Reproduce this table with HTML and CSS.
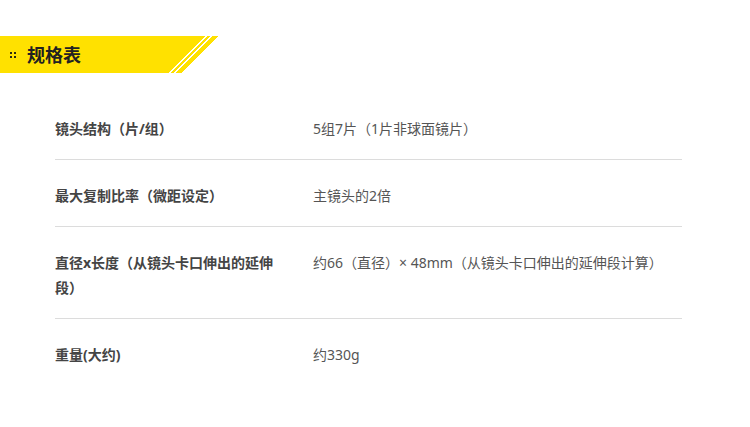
FILE: index.html
```html
<!DOCTYPE html>
<html lang="zh-CN">
<head>
<meta charset="utf-8">
<title>规格表</title>
<link rel="stylesheet" href="styles.css">
</head>
<body>
<div class="banner">
  <span class="dots"><i></i><i></i><i></i><i></i></span>
  <h2 class="title">规格表</h2>
</div>
<div class="specs">
  <div class="row">
    <div class="label">镜头结构（片/组）</div>
    <div class="value">5组7片（1片非球面镜片）</div>
  </div>
  <div class="row">
    <div class="label">最大复制比率（微距设定）</div>
    <div class="value">主镜头的2倍</div>
  </div>
  <div class="row">
    <div class="label">直径x长度（从镜头卡口伸出的延伸段）</div>
    <div class="value">约66（直径）× 48mm（从镜头卡口伸出的延伸段计算）</div>
  </div>
  <div class="row last">
    <div class="label">重量(大约)</div>
    <div class="value">约330g</div>
  </div>
</div>
</body>
</html>
```

FILE: styles.css
```css
html, body {
  margin: 0;
  padding: 0;
  background: #fff;
}
body {
  font-family: "Noto Sans", "Noto Sans CJK SC", sans-serif;
  width: 750px;
}
.banner {
  margin-top: 36px;
  width: 225px;
  height: 37px;
  display: flex;
  align-items: center;
  padding-left: 10px;
  box-sizing: border-box;
  background: linear-gradient(135deg,
    #ffe100 0, #ffe100 145px,
    transparent 145px, transparent 146.8px,
    #ffe100 146.8px, #ffe100 148.6px,
    transparent 148.6px, transparent 150.4px,
    #ffe100 150.4px, #ffe100 154.5px,
    transparent 154.5px);
}
.dots {
  display: grid;
  grid-template-columns: 2px 2px;
  grid-template-rows: 2px 2px;
  gap: 2px;
  margin-right: 11px;
}
.dots i {
  display: block;
  background: #2b2a10;
}
.title {
  margin: 0;
  font-family: "Noto Sans CJK SC", sans-serif;
  font-size: 18px;
  font-weight: 700;
  color: #222;
  line-height: 25px;
}
.specs {
  margin: 20px 0 0 55px;
  width: 627px;
}
.row {
  display: grid;
  grid-template-columns: 258px 1fr;
  padding: 23px 0 18px;
  border-bottom: 1px solid #dcdcdc;
  font-size: 14px;
  line-height: 25px;
}
.row.last {
  border-bottom: none;
}
.label {
  font-weight: 700;
  color: #444;
  padding-right: 34px;
}
.value {
  color: #555;
}
```
